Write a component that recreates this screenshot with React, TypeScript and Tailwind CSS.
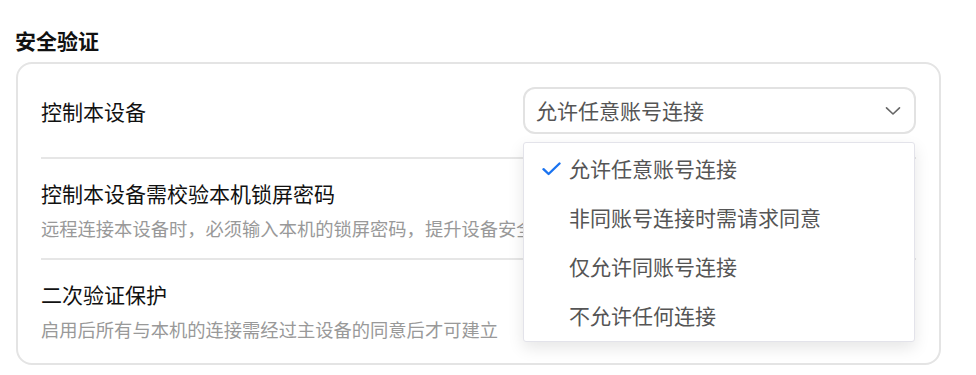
import { useState } from "react";

const options = [
  "允许任意账号连接",
  "非同账号连接时需请求同意",
  "仅允许同账号连接",
  "不允许任何连接",
];

function Check() {
  return (
    <svg width="19" height="14" viewBox="0 0 19 14" fill="none">
      <path
        d="M1.5 7.2 L6.6 12 L17.5 1.5"
        stroke="#1a73f0"
        strokeWidth="2.4"
        strokeLinecap="round"
        strokeLinejoin="round"
      />
    </svg>
  );
}

function Chevron() {
  return (
    <svg width="16" height="10" viewBox="0 0 16 10" fill="none">
      <path
        d="M1.5 1.8 L8 8 L14.5 1.8"
        stroke="#666"
        strokeWidth="1.6"
        strokeLinecap="round"
        strokeLinejoin="round"
      />
    </svg>
  );
}

export default function App() {
  const [selected] = useState(0); // current option

  return (
    <div
      className="w-[976px] h-[375px] bg-white pl-4 pt-[26px] overflow-hidden"
      style={{ fontFamily: '"Noto Sans CJK SC", "Noto Sans", sans-serif' }}
    >
      <h2 className="text-[21px] leading-[28px] font-bold text-[#111] mb-2 -ml-px">
        安全验证
      </h2>

      <div className="w-[925px] border-2 border-[#e4e4e4] rounded-[16px] px-[23px] pb-[2px]">
        {/* control this device */}
        <div className="flex items-center justify-between py-[23px] border-b-2 border-[#e6e6e6]">
          <span className="text-[21px] leading-[28px] text-[#111]">控制本设备</span>
          <div className="relative">
            <div className="w-[393px] h-[47px] border-2 border-[#e2e2e2] rounded-[12px] flex items-center justify-between pl-[11px] pr-[13px]">
              <span className="text-[21px] text-[#555]">{options[selected]}</span>
              <Chevron />
            </div>
            <div className="absolute left-0 top-[55px] w-[392px] bg-white border border-[#e3e3ea] rounded-[3px] shadow-[0_6px_16px_rgba(0,0,0,0.1)] py-px z-10">
              {options.map((opt, i) => (
                <div key={opt} className="h-[49px] flex items-center pl-[18px]">
                  <span className="w-[27px] flex items-center">
                    {i === selected && <Check />}
                  </span>
                  <span className="text-[21px] text-[#555]">{opt}</span>
                </div>
              ))}
            </div>
          </div>
        </div>

        {/* lock screen password */}
        <div className="pt-5 pb-[18px] border-b-2 border-[#e6e6e6]">
          <div className="text-[21px] leading-[28px] text-[#111]">控制本设备需校验本机锁屏密码</div>
          <div className="mt-[9px] text-[18.3px] leading-[24px] text-[#999]">
            远程连接本设备时，必须输入本机的锁屏密码，提升设备安全性
          </div>
        </div>

        {/* second verification */}
        <div className="pt-5 pb-5">
          <div className="text-[21px] leading-[28px] text-[#111]">二次验证保护</div>
          <div className="mt-[9px] text-[18.3px] leading-[24px] text-[#999]">
            启用后所有与本机的连接需经过主设备的同意后才可建立
          </div>
        </div>
      </div>
    </div>
  );
}
